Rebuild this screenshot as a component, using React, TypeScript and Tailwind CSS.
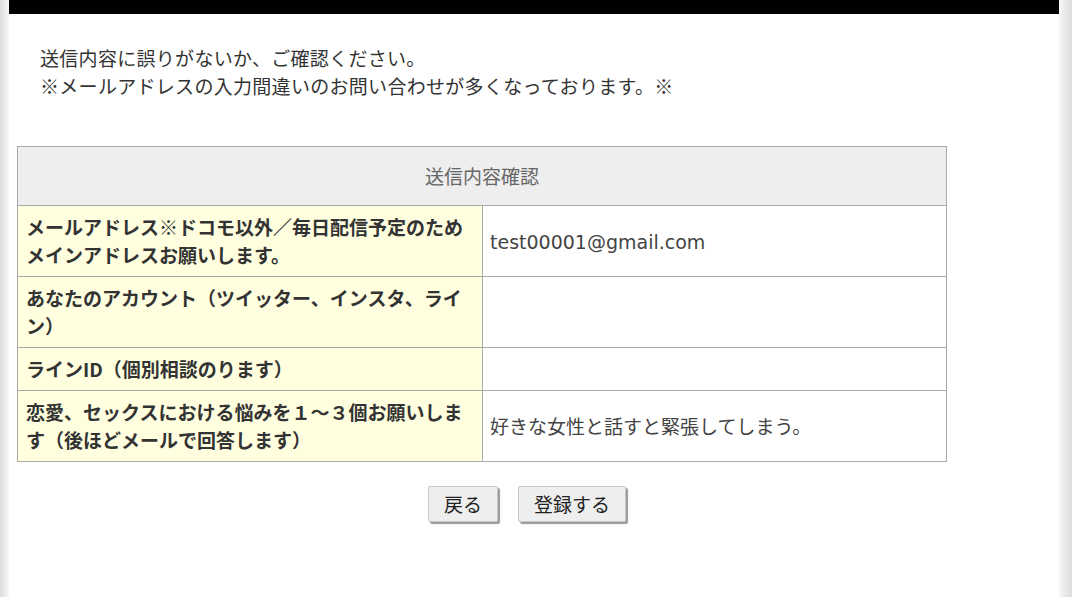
import React from 'react';

const rows: { label: string; value: string; latin?: boolean }[] = [
  { label: 'メールアドレス※ドコモ以外／毎日配信予定のためメインアドレスお願いします。', value: 'test00001@gmail.com', latin: true },
  { label: 'あなたのアカウント（ツイッター、インスタ、ライン）', value: '' },
  { label: 'ラインID（個別相談のります）', value: '' },
  { label: '恋愛、セックスにおける悩みを１～３個お願いします（後ほどメールで回答します）', value: '好きな女性と話すと緊張してしまう。' },
];

export default function App() {
  return (
    <div
      className="flex min-h-[597px] w-full bg-white text-[#333]"
      style={{ fontFamily: '"Noto Sans CJK JP", "Noto Sans", sans-serif' }}
    >
      {/* left shade */}
      <div className="w-[9px] shrink-0 bg-gradient-to-r from-[#dcdcdc] to-[#f7f7f7]" />

      <div className="flex-1 min-w-0">
        <div className="h-[14px] bg-black" />

        {/* notice */}
        <div className="pt-[30px] pl-[31px] text-[19px] leading-[28px] tracking-[0.3px] text-[#333]">
          <p>送信内容に誤りがないか、ご確認ください。</p>
          <p>※メールアドレスの入力間違いのお問い合わせが多くなっております。※</p>
        </div>

        {/* confirm table */}
        <table className="mt-[46px] ml-[8px] w-[930px] border-collapse text-[19px] leading-[28px]">
          <thead>
            <tr>
              <th
                colSpan={2}
                className="border border-[#aaa] bg-[#eee] py-[15px] text-center font-normal text-[#666]"
              >
                送信内容確認
              </th>
            </tr>
          </thead>
          <tbody>
            {rows.map((r) => (
              <tr key={r.label}>
                <th className="w-[465px] border border-[#aaa] bg-[#ffffe0] px-[8px] py-[7px] text-left align-middle font-bold text-[#333]">
                  {r.label}
                </th>
                <td className="border border-[#aaa] px-[7px] py-[7px] align-middle text-[#444]">
                  {r.latin ? (
                    <span className="font-['DejaVu_Sans',sans-serif]">{r.value}</span>
                  ) : (
                    r.value
                  )}
                </td>
              </tr>
            ))}
          </tbody>
        </table>

        {/* buttons */}
        <div className="mt-[24px] flex gap-[20px] pl-[419px]">
          <button
            type="button"
            className="h-[36px] rounded-[2px] border border-[#c8c8c8] bg-[#eee] px-[15px] text-[19px] leading-[28px] text-[#222] shadow-[2px_2px_1px_#9a9a9a]"
          >
            戻る
          </button>
          <button
            type="button"
            className="h-[36px] rounded-[2px] border border-[#c8c8c8] bg-[#eee] px-[15px] text-[19px] leading-[28px] text-[#222] shadow-[2px_2px_1px_#9a9a9a]"
          >
            登録する
          </button>
        </div>
      </div>

      {/* right shade */}
      <div className="w-[13px] shrink-0 bg-gradient-to-r from-[#f7f7f7] to-[#dcdcdc]" />
    </div>
  );
}
